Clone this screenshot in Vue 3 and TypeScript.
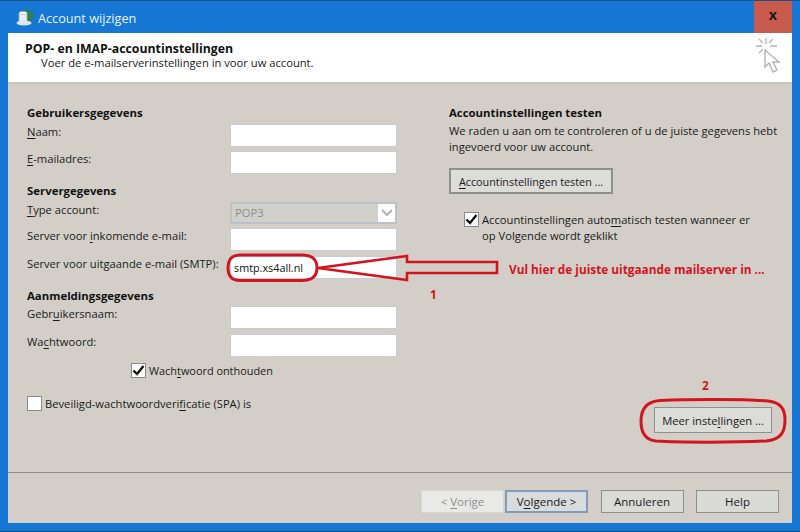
<script setup lang="ts">
const navButtons = [
  { id: 'prev', before: '< ', key: 'V', after: 'orige', cls: 'disabled' },
  { id: 'next', before: '', key: 'V', after: 'olgende >', cls: 'primary', keyAt: 1 },
  { id: 'cancel', before: 'Annuleren', key: '', after: '', cls: 'spaced' },
  { id: 'help', before: 'Help', key: '', after: '', cls: 'spaced' },
]
</script>

<template>
  <div class="window">
    <header class="titlebar">
      <svg class="appicon" width="18" height="18" viewBox="0 0 18 18">
        <circle cx="11" cy="7" r="6.5" fill="#2f7f5a" />
        <path d="M3 4h8v9H3z" fill="#e8eef2" stroke="#9fb0bc" stroke-width=".8" />
        <ellipse cx="7" cy="4" rx="4" ry="1.6" fill="#fff" stroke="#9fb0bc" stroke-width=".6" />
        <ellipse cx="8" cy="14" rx="7.5" ry="2.6" fill="#dfe6ea" />
      </svg>
      <span class="title">Account wijzigen</span>
      <span class="close">x</span>
    </header>

    <main class="client">
      <section class="banner">
        <div>
          <h1>POP- en IMAP-accountinstellingen</h1>
          <p>Voer de e-mailserverinstellingen in voor uw account.</p>
        </div>
        <svg class="wizard" width="26" height="38" viewBox="0 0 26 38" fill="none" stroke="#b4b4b4">
          <g stroke-width="1.3">
            <path d="M11 1v6M11 13v4M1 9h6M15 9h7M4 2l4 4M18 2l-4 4M4 16l4-4" />
          </g>
          <path d="M10 13v17l4-4 4 9 4-2-4-8h6z" fill="#fff" stroke-width="1.4" />
        </svg>
      </section>

      <section class="body">
        <div class="left">
          <h2>Gebruikersgegevens</h2>
          <div class="row first"><label><u>N</u>aam:</label><div class="input"></div></div>
          <div class="row"><label><u>E</u>-mailadres:</label><div class="input"></div></div>

          <h2 class="group">Servergegevens</h2>
          <div class="row first short"><label><u>T</u>ype account:</label>
            <div class="input select"><span>POP3</span>
              <i class="chevron"><svg width="12" height="8" viewBox="0 0 12 8" fill="none" stroke="#a9adb1" stroke-width="1.8"><path d="M1 1l5 5 5-5" /></svg></i>
            </div>
          </div>
          <div class="row"><label>Server voor <u>i</u>nkomende e-mail:</label><div class="input"></div></div>
          <div class="row"><label>Server voor uitgaande e-mail (SMTP):</label><div class="input value">smtp.xs4all.nl</div></div>

          <h2 class="group">Aanmeldingsgegevens</h2>
          <div class="row first"><label>Gebr<u>u</u>ikersnaam:</label><div class="input"></div></div>
          <div class="row"><label>Wa<u>c</u>htwoord:</label><div class="input"></div></div>

          <div class="check remember">
            <span class="box"><svg width="13" height="11" viewBox="0 0 13 11" fill="none" stroke="#111" stroke-width="2.4"><path d="M1.5 5.500l3.500 3.500 6.500-8" /></svg></span>
            <span class="tight">Wach<u>t</u>woord onthouden</span>
          </div>
          <div class="check spa">
            <span class="box"></span>
            <span>Beveiligd-wachtwoordveri<u>f</u>icatie (SPA) is</span>
          </div>
        </div>

        <div class="right">
          <h2>Accountinstellingen testen</h2>
          <p class="hint">We raden u aan om te controleren of u de juiste gegevens hebt ingevoerd voor uw account.</p>
          <button class="btn test"><u>A</u>ccountinstellingen testen ...</button>
          <div class="check auto">
            <span class="box"><svg width="13" height="11" viewBox="0 0 13 11" fill="none" stroke="#111" stroke-width="2.4"><path d="M1.5 5.500l3.500 3.500 6.500-8" /></svg></span>
            <span>Accountinstellingen auto<u>m</u>atisch testen wanneer er<br />op Volgende wordt geklikt</span>
          </div>
          <button class="btn more">Meer inste<u>l</u>lingen ...</button>
        </div>
      </section>

      <footer class="footer">
        <button v-for="b in navButtons" :key="b.id" class="btn nav" :class="b.cls">
          <template v-if="b.keyAt">V<u>o</u>lgende &gt;</template>
          <template v-else>{{ b.before }}<u v-if="b.key">{{ b.key }}</u>{{ b.after }}</template>
        </button>
      </footer>
    </main>

    <svg class="marks" width="800" height="532" viewBox="0 0 800 532" fill="none" stroke="#d2141f" stroke-width="3">
      <path d="M240 254H302C313 254 317 259 317 266.500S313 279.500 302 279.500H240C231 279.500 228 274 228 266.500S231 254 240 254Z" />
      <path d="M318 267L407 255V261H497V272H407V279Z" stroke-width="2.600" />
      <path d="M660 399.500C690 398 745 398 768 400C781 401.500 785 408 785 419C785 431 781 438.500 766 440C735 441.500 680 441.500 656 440C645 439 641 431 641 420C641 409 646 400.500 660 399.500Z" stroke-width="3" />
    </svg>
    <span class="note msg">Vul hier de juiste uitgaande mailserver in ...</span>
    <span class="note one">1</span>
    <span class="note two">2</span>
  </div>
</template>

<style>
html, body { margin: 0; background: #1677d4; }
</style>

<style scoped>
.window {
  position: relative;
  width: 800px;
  height: 532px;
  box-sizing: border-box;
  padding: 1px 8px 8px;
  background: #1677d4;
  border-top: 1px solid #1a5288;
  border-bottom: 1px solid #164a7c;
  font-family: "Open Sans", "Noto Sans", sans-serif;
  font-size: 11.2px;
  color: #1a1a1a;
  overflow: hidden;
  display: flex;
  flex-direction: column;
}
u { text-underline-offset: 2px; }
.titlebar { height: 31px; display: flex; align-items: center; flex: none; }
.appicon { margin-left: 8px; }
.title { margin-left: 4px; color: #e8f1fa; font-size: 12.7px; }
.close {
  margin-left: auto;
  width: 38px;
  height: 32px;
  margin-top: -1px;
  background: #c75b4e;
  color: #111;
  font: bold 15px/28px "Liberation Sans", sans-serif;
  text-align: center;
}
.client { flex: 1; display: flex; flex-direction: column; background: #d3cfc8; min-height: 0; }
.banner {
  height: 51px;
  box-sizing: border-box;
  flex: none;
  background: #fff;
  border-bottom: 2px solid #c8c5be;
  padding: 8px 11px 0 17px;
  display: flex;
  justify-content: space-between;
}
h1 { margin: 0; font-size: 12.3px; line-height: 15px; font-weight: 700; color: #111; }
.banner p { margin: 0 0 0 16px; line-height: 14px; }
.wizard { margin-top: -4px; }
.body { flex: 1; display: flex; padding: 21px 0 0 19px; min-height: 0; }
h2 { margin: 0; font-size: 11.4px; line-height: 16px; font-weight: 700; color: #111; }
.left { width: 370px; display: flex; flex-direction: column; }
.row { display: flex; justify-content: space-between; margin-top: 4.5px; height: 23px; }
.row.first { margin-top: 2.5px; }
.row.short { height: 22px; }
.row.short .input { height: 22px; }
.row label { line-height: 16px; }
.group { margin-top: 9px; }
.input {
  width: 167px;
  height: 23px;
  box-sizing: border-box;
  background: #fff;
  border: 1px solid #c9cdd0;
  padding-left: 3px;
  line-height: 21px;
}
.select {
  background: #d2d0ca;
  border: 2px solid #bcc2c9;
  color: #8e8e8a;
  display: flex;
  justify-content: space-between;
  line-height: 18px;
}
.chevron { width: 17px; background: #fff; display: flex; align-items: center; justify-content: center; }
.value { color: #111; font-size: 10.8px; }
.check { display: flex; align-items: flex-start; gap: 3px; line-height: 16px; }
.box {
  width: 15px;
  height: 15px;
  box-sizing: border-box;
  flex: none;
  background: #fff;
  border: 1px solid #8a8a8a;
  display: flex;
  align-items: center;
  justify-content: center;
}
.remember { margin: 6px 0 0 104px; }
.tight { font-size: 10.9px; white-space: nowrap; }
.spa { margin-top: 17px; }
.right { flex: 1; display: flex; flex-direction: column; padding: 0 0 0 52px; position: relative; }
.hint { margin: 2px 0 0 0; line-height: 16px; }
.btn {
  box-sizing: border-box;
  border: 1px solid #8f8f8c;
  background: #dcdcd9;
  color: #1a1a1a;
  font: inherit;
  padding: 0;
}
.test { width: 164px; height: 26px; margin-top: 13px; border-width: 2px; font-size: 10.8px; }
.auto { margin: 18px 0 0 15px; }
.more {
  width: 118px;
  height: 26px;
  margin: 163px 0 0 205px;
}
.footer {
  height: 51px;
  box-sizing: border-box;
  flex: none;
  border-top: 1px solid #8f8d88;
  display: flex;
  justify-content: flex-end;
  padding: 17px 13px 0 0;
  align-items: flex-start;
}
.nav { width: 83px; height: 23px; margin-left: 1px; background: #dadad7; font-size: 11.5px; }
.spaced { margin-left: 12.5px; }
.disabled { background: #e9e9e7; color: #8f8f8f; border-color: #d6d6d3; }
.primary { border: 2px solid #7f9db9; background: #d9dcdc; }
.marks { position: absolute; left: 0; top: 0; pointer-events: none; }
.note {
  position: absolute;
  color: #d2141f;
  font-weight: 700;
  font-size: 11.8px;
  line-height: 16px;
  white-space: nowrap;
}
.msg { left: 509px; top: 260px; }
.one { left: 430px; top: 285px; }
.two { left: 702px; top: 376px; }
</style>
